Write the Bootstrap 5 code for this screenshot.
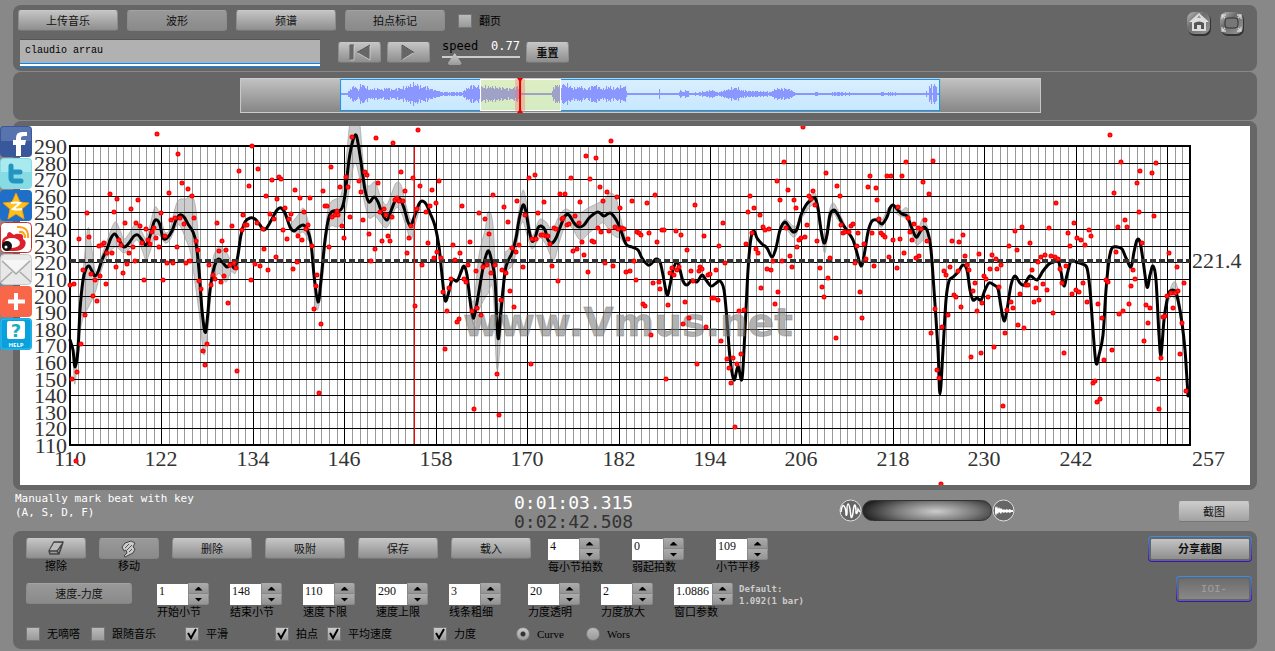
<!DOCTYPE html>
<html lang="zh-CN">
<head>
<meta charset="utf-8">
<meta name="viewport" content="width=device-width, initial-scale=1">
<title>Vmus.net</title>
<link rel="stylesheet" href="https://cdn.jsdelivr.net/npm/bootstrap@5.3.0/dist/css/bootstrap.min.css">
<style>
body{background:#888;color:#000;font:11px/14px "Liberation Sans","Noto Sans CJK SC",sans-serif;padding:5px 18px 0 13px}
.panel{background:#666;border-radius:8px;margin-bottom:1px}
.panel svg,.side svg{display:block}
.top{height:66px;padding:5px 12px 4px 5px}
.strip{padding:6px 0 7px}
.strip svg{width:64.4%;margin-left:18.25%}
.plot{padding:5px 7px}
.plot svg{width:100%;height:auto;background:#fff}
.key{height:21px;padding:0;border:1px solid #8c8c8c;border-top-color:#c8c8c8;border-bottom-color:#777;border-radius:3px;background:linear-gradient(#c4c4c4,#8e8e8e);font-size:11px;line-height:18px;color:#111;display:flex;align-items:center;justify-content:center;flex:none}
.key.dim{background:linear-gradient(#999,#8a8a8a);border-color:#a2a2a2 #8c8c8c #858585}
.key.lit{background:linear-gradient(#ccc,#a2a2a2)}
.w43{width:43px}.w60{width:60px}.w72{width:72px}.w80{width:80px}.w100{width:100px}.w106{width:106px}
.song{width:300px;height:28px;margin-left:2px;padding:0 5px 6px;border:0;border-top:1px solid #555;border-bottom:1px solid #08f;border-radius:0;background:#b1b1b1;box-shadow:inset 0 -2px #fff,inset 0 -3px #08f;font:10px/14px "Liberation Mono",monospace;color:#000}
.mono{font-family:"DejaVu Sans Mono",monospace}
.speed{width:78px;font-size:12px;line-height:14px;margin:0 6px 0 12px}
.slide{appearance:none;display:block;width:100%;height:12px;margin:0;background:linear-gradient(#ccc,#ccc) 0 3px/100% 2px no-repeat}
.slide::-webkit-slider-thumb{appearance:none;width:14px;height:12px;background:linear-gradient(#ccc,#999);clip-path:polygon(50% 0,100% 85%,90% 100%,10% 100%,0 85%)}
.tick{appearance:none;width:14px;height:14px;margin:0;flex:none;background:linear-gradient(#bbb,#999);border:1px solid #777}
.tick:checked{background:url("data:image/svg+xml,%3Csvg xmlns='http://www.w3.org/2000/svg' viewBox='0 0 12 12'%3E%3Cpath d='M2 5l3 5 5-9' fill='none' stroke='%23000' stroke-width='2'/%3E%3C/svg%3E"),linear-gradient(#ccc,#999)}
.tick[type=radio]{border-radius:50%}
.tick[type=radio]:checked{background:radial-gradient(circle,#333 2px,transparent 3px),linear-gradient(#ccc,#999)}
.opt{display:flex;align-items:center;gap:7px;flex:none}
.opt span{white-space:nowrap}
.o65{width:65px}.o94{width:94px}.o90{width:90px}.o52{width:52px}.o106{width:106px}.o83{width:83px}.o70{width:70px}
.latin{font-family:"Liberation Serif",serif}
.between{height:40px;display:grid;grid-template-columns:501px 1fr 176px 241px;align-items:start}
.note{color:#fff;font-size:11px;line-height:14px;padding:1px 0 0 2px}
.clock{font-size:18px;line-height:19px;padding-top:2px;color:#fff}
.clock .total{color:#333}
.tone{appearance:none;width:130px;height:21px;margin:0;border-radius:11px;background:radial-gradient(ellipse 58% 95% at 57% 55%,#ccc,#777 55%,#222);border:1px solid #333}
.tone::-webkit-slider-thumb{appearance:none;width:1px;height:1px}
.dial{margin-left:-1px;padding-top:8px}
.controls{height:118px;padding:5px 5px 0 13px}
.tools{gap:13px;height:47px;padding-top:2px}
.fields{gap:12px;height:42px}
.spin{width:61px;flex:none}
.spin.wide{width:71px}
.spin label{display:block;white-space:nowrap;line-height:14px}
.num{display:flex;height:22px}
.num input{width:31px;height:21px;margin-top:1px;padding:0 2px 6px;border:0;border-radius:0;font:12px/14px "Liberation Serif",serif;color:#111;background:#fff}
.last .num input{width:38px}
.num div{width:21px;background:#888;border-radius:0 3px 3px 0;overflow:hidden}
.num button{display:block;width:21px;height:11px;padding:0;border:1px solid #888;border-top-color:#aaa;background:linear-gradient(#aaa,#949494)}
.num button::before{content:"";display:block;margin:auto;width:8px;height:4px;background:#000;clip-path:polygon(50% 0,100% 100%,0 100%)}
.num button+button::before{clip-path:polygon(0 0,100% 0,50% 100%)}
.tool{text-align:center;flex:none}
.ring{padding:1px;border-radius:4px;background:linear-gradient(#3c8fe8,#3a10c8);width:104px;height:26px}
.ring .key{width:100%;height:24px;font-weight:700;border:2px solid #666}
.ring.small-ring{width:76px}
.ring .key:disabled{background:linear-gradient(#6d6d6d,#888);color:#a0a0a0;font-weight:400;font-family:"Liberation Mono",monospace}
.default{font-size:9px;line-height:12px;font-weight:700;color:#ccc;margin-left:4px;white-space:nowrap}
.side{position:absolute;left:0;top:126px;width:32px}
</style>
</head>
<body>
<header class="panel top d-flex justify-content-between">
  <div>
    <div class="d-flex align-items-center" style="gap:9px">
      <button class="key w100">上传音乐</button><button class="key dim w100">波形</button><button class="key w100">频谱</button><button class="key dim w100">拍点标记</button>
      <label class="opt ms-1"><input class="tick" type="checkbox"><span>翻页</span></label>
    </div>
    <div class="d-flex pt-2">
      <input class="song" type="text" value="claudio arrau" aria-label="曲名">
      <div class="d-flex" style="padding:3px 0 0 18px;gap:6px">
        <button class="key w43" aria-label="后退"><svg width="22" height="17" viewBox="0 0 22 17"><path d="M1 1h4v15H1zM21 1v15L8 8.500z" fill="#666" stroke="#ddd" stroke-width=".7"/><path d="M1 16V1h4M21 1L8 8.500" fill="none" stroke="#444"/></svg></button>
        <button class="key w43" aria-label="播放"><svg width="15" height="17" viewBox="0 0 15 17"><path d="M1 1v15l12-7.500z" fill="#666" stroke="#ddd" stroke-width=".7"/><path d="M1 16V1l12 7.500" fill="none" stroke="#444"/></svg></button>
      </div>
      <div class="speed mono"><label for="speed" class="d-flex justify-content-between"><span>speed</span><span class="text-white">0.77</span></label><input class="slide" id="speed" type="range" min="0.65" max="2" step="0.01" value="0.77"></div>
      <div style="padding-top:3px"><button class="key w43 fw-bold">重置</button></div>
    </div>
  </div>
  <nav class="d-flex" style="gap:6px">
    <a href="#home" aria-label="主页"><svg width="27" height="27" viewBox="0 0 27 27"><defs><linearGradient id="glass" x2="1" y2="1"><stop stop-color="#bbb"/><stop offset=".4" stop-color="#6c6c6c"/><stop offset="1" stop-color="#999"/></linearGradient></defs><rect x="3" y="3" width="23" height="23" rx="7" fill="#333"/><rect x="2" y="2" width="23" height="22" rx="7" fill="url(#glass)"/><path d="M14 3L4 12h3v9h14v-9h3z" fill="#ddd"/><path d="M9 13q5-3 10 0v6h-3v-4h-4v4H9z" fill="#555"/><path d="M14 5l-2 3h4z" fill="#999"/></svg></a>
    <a href="#full" aria-label="全屏"><svg width="27" height="27" viewBox="0 0 27 27"><rect x="3" y="3" width="23" height="23" rx="7" fill="#333"/><rect x="2" y="2" width="23" height="22" rx="7" fill="url(#glass)"/><rect x="7" y="8" width="13" height="10" rx="3" fill="#777" stroke="#333"/><path d="M4 9V5h4M4 5l3 3M23 9V5h-4M23 5l-3 3M4 17v4h4M4 21l3-3M23 17v4h-4M23 21l-3-3" fill="none" stroke="#d4d4d4" stroke-width="1.300"/></svg></a>
  </nav>
</header>

<section class="panel strip">
  <svg viewBox="240 78 801 35"><defs><linearGradient id="steel" x2="0" y2="1"><stop stop-color="#c2c2c2"/><stop offset="1" stop-color="#858585"/></linearGradient><linearGradient id="sky" x2="0" y2="1"><stop stop-color="#d9efff"/><stop offset="1" stop-color="#c6e8ff"/></linearGradient></defs>
    <rect x="240.500" y="78.500" width="800" height="34" fill="url(#steel)" stroke="#ccc"/>
    <rect x="340.500" y="79.500" width="599" height="31" fill="url(#sky)" stroke="#1296f5"/>
    <path id="wave" stroke="#8890ff"/>
    <rect x="480.500" y="79.500" width="80" height="31" fill="#e0ee96" fill-opacity=".58"/>
    <path id="waveSel" stroke="#9c9cc8"/>
    <rect x="480.500" y="79.500" width="80" height="31" fill="none" stroke="#fff"/>
    <rect x="515" y="79" width="10" height="33" fill="#f66" opacity=".35"/><path d="M520 78v34" stroke="#e00000" stroke-width="2"/><path d="M517 78h6l-2 3h-2zM517 113h6l-2-3h-2z" fill="#e00"/>
  </svg>
</section>

<main class="panel plot">
  <svg viewBox="20 126 1230 359" font-family="'Liberation Serif',serif" font-size="22">
    <path id="band" fill="#888" fill-opacity=".42" stroke="#888" stroke-opacity=".5"/>
    <path id="minor" stroke="#999" shape-rendering="crispEdges"/>
    <path id="major" stroke="#000" shape-rendering="crispEdges"/>
    <rect x="70" y="146" width="1120" height="299" fill="none" stroke="#000" stroke-width="2"/>
    <path id="curve" fill="none" stroke="#000" stroke-width="3" stroke-linejoin="round" stroke-linecap="round"/>
    <path d="M70 261H1190" stroke="#333" stroke-width="4" stroke-dasharray="6 3"/>
    <path d="M414.500 147V444" stroke="red" shape-rendering="crispEdges"/>
    <text x="463" y="336" font-family="'DejaVu Sans',sans-serif" font-weight="700" font-size="39" fill="#777" fill-opacity=".58" stroke="#777" stroke-opacity=".4">www.Vmus.net</text>
    <g id="labels" fill="#333"></g>
    <g id="beats" fill="#f99" stroke="red" stroke-width="2"></g>
  </svg>
</main>

<section class="between">
  <div class="note mono">Manually mark beat with key<br>(A, S, D, F)</div>
  <div class="clock mono"><div>0:01:03.315</div><div class="total">0:02:42.508</div></div>
  <div class="dial d-flex align-items-center" style="gap:0">
    <svg class="flex-shrink-0" width="23" height="23" viewBox="0 0 23 23"><circle cx="11.500" cy="11.500" r="10.500" fill="#666" stroke="#ddd"/><path d="M2 13q1-8 3-6t2 9q1 1 1-3 0-8 1-8t2 5l1 8q1 2 2-4 1-9 2-8t1 8q1 2 2-4l2 3" fill="none" stroke="#fff" stroke-width="1.500"/></svg>
    <input class="tone flex-shrink-0" type="range" aria-label="混音">
    <svg class="flex-shrink-0" width="23" height="23" viewBox="0 0 23 23"><circle cx="11.500" cy="11.500" r="10.500" fill="#666" stroke="#ddd"/><path d="M3 7l1 2 1-2 1 3 1-2 1 2 1-1 2 2 1-1 1 1 2-1 1 1 2-1 1 1h2v2h-2l-1 1-2-1-1 1-2-1-1 1-2-1-1 2-2-2-1 2-1-1-1 3-1-3z" fill="#fff"/></svg>
  </div>
  <div class="d-flex justify-content-end" style="padding:10px 7px 0 0"><button class="key lit w72">截图</button></div>
</section>

<section class="panel controls d-flex justify-content-between">
  <div>
    <div class="tools d-flex align-items-start">
      <div class="tool"><button class="key w60" aria-label="擦除"><svg width="18" height="17" viewBox="0 0 18 17"><path d="M7 2h9l-4 12H3l-1-3zM2 11h8l6-9M10 11l2 3" fill="#999" stroke="#444" stroke-width="1.500" stroke-linejoin="round"/><path d="M7 3h8l-5 7H3z" fill="#bbb"/></svg></button>擦除</div>
      <div class="tool"><button class="key dim w60" aria-label="移动"><svg width="18" height="18" viewBox="0 0 18 18"><path d="M2 7l3-4 6-2 4 2-2 4 2 2-2 4-4 2-4 2-1-1 3-3-1-3-2 1-1-2z" fill="#ccc" stroke="#444"/><path d="M5 8l4-4M7 10l5-5M9 12l3-3" fill="none" stroke="#555"/></svg></button>移动</div>
      <button class="key w80">删除</button><button class="key w80">吸附</button><button class="key w80">保存</button><button class="key w80">载入</button>
      <div class="spin wide ms-1"><div class="num"><input id="n1" value="4"><div><button aria-label="增"></button><button aria-label="减"></button></div></div><label for="n1">每小节拍数</label></div>
      <div class="spin wide"><div class="num"><input id="n2" value="0"><div><button aria-label="增"></button><button aria-label="减"></button></div></div><label for="n2">弱起拍数</label></div>
      <div class="spin wide"><div class="num"><input id="n3" value="109"><div><button aria-label="增"></button><button aria-label="减"></button></div></div><label for="n3">小节平移</label></div>
    </div>
    <div class="fields d-flex align-items-start">
      <button class="key dim w106" style="margin-right:13px">速度-力度</button>
      <div class="spin"><div class="num"><input id="m1" value="1"><div><button aria-label="增"></button><button aria-label="减"></button></div></div><label for="m1">开始小节</label></div>
      <div class="spin"><div class="num"><input id="m2" value="148"><div><button aria-label="增"></button><button aria-label="减"></button></div></div><label for="m2">结束小节</label></div>
      <div class="spin"><div class="num"><input id="m3" value="110"><div><button aria-label="增"></button><button aria-label="减"></button></div></div><label for="m3">速度下限</label></div>
      <div class="spin"><div class="num"><input id="m4" value="290"><div><button aria-label="增"></button><button aria-label="减"></button></div></div><label for="m4">速度上限</label></div>
      <div class="spin"><div class="num"><input id="m5" value="3"><div><button aria-label="增"></button><button aria-label="减"></button></div></div><label for="m5">线条粗细</label></div>
      <div class="spin" style="margin-left:6px"><div class="num"><input id="m6" value="20"><div><button aria-label="增"></button><button aria-label="减"></button></div></div><label for="m6">力度透明</label></div>
      <div class="spin"><div class="num"><input id="m7" value="2"><div><button aria-label="增"></button><button aria-label="减"></button></div></div><label for="m7">力度放大</label></div>
      <div class="d-flex"><div class="spin last"><div class="num"><input id="m8" value="1.0886"><div><button aria-label="增"></button><button aria-label="减"></button></div></div><label for="m8">窗口参数</label></div><div class="default mono">Default:<br>1.092(1 bar)</div></div>
    </div>
    <div class="d-flex" style="padding-top:2px">
      <label class="opt o65"><input class="tick" type="checkbox"><span>无嘀嗒</span></label>
      <label class="opt o94"><input class="tick" type="checkbox"><span>跟随音乐</span></label>
      <label class="opt o90"><input class="tick" type="checkbox" checked><span>平滑</span></label>
      <label class="opt o52"><input class="tick" type="checkbox" checked><span>拍点</span></label>
      <label class="opt o106"><input class="tick" type="checkbox" checked><span>平均速度</span></label>
      <label class="opt o83"><input class="tick" type="checkbox" checked><span>力度</span></label>
      <label class="opt o70"><input class="tick" type="radio" name="mode" checked><span class="latin">Curve</span></label>
      <label class="opt"><input class="tick" type="radio" name="mode"><span class="latin">Wors</span></label>
    </div>
  </div>
  <div class="d-flex flex-column align-items-end" style="gap:14px">
    <div class="ring"><button class="key">分享截图</button></div>
    <div class="ring small-ring"><button class="key" disabled>IOI-</button></div>
  </div>
</section>

<nav class="side">
  <a href="#facebook" aria-label="Facebook"><svg width="32" height="32" viewBox="0 0 32 32"><rect y="0" width="32" height="31" rx="4" fill="#39589c"/><path d="M1 4q0-3 3-3h24q3 0 3 3v11H1z" fill="#5873ad"/><path d="M16 30V19h-3v-5h3v-2q0-6 6-6h5v4h-3q-3 0-3 2v2h5l-1 5h-4v11z" fill="#fff"/></svg></a>
  <a href="#twitter" aria-label="Twitter"><svg width="32" height="32" viewBox="0 0 32 32"><rect width="32" height="31" rx="4" fill="#86dbe4"/><path d="M1 4q0-3 3-3h24q3 0 3 3v10H1z" fill="#a8eaee"/><path d="M11 8v12q0 3 4 3h6M11 14h9" fill="none" stroke="#2494c2" stroke-width="5" stroke-linecap="round"/></svg></a>
  <a href="#qzone" aria-label="QZone"><svg width="32" height="32" viewBox="0 0 32 32"><rect width="32" height="31" rx="4" fill="#1f6fc9"/><path d="M16 3l4 9 9 1-7 6 2 10-8-5-8 5 2-10-7-6 9-1z" fill="#ffc21c" stroke="#ee9b10"/><path d="M11 13q5-1 9 0l-7 6q5 1 9 0" fill="none" stroke="#fff" stroke-width="2"/></svg></a>
  <a href="#weibo" aria-label="Weibo"><svg width="32" height="32" viewBox="0 0 32 32"><rect x=".5" y=".5" width="31" height="30" rx="4" fill="#fff" stroke="#c5302b"/><path d="M2 20q0-4 5-6 0-4 3-4l4 3q2-2 6-1 4 0 3 5 4 2 2 7-2 5-11 5H5Q1 25 2 20z" fill="#dc1f2a"/><ellipse cx="12" cy="21" rx="8" ry="5" fill="#fff"/><circle cx="7" cy="24" r="5" fill="#111"/><circle cx="6" cy="25" r="1.500" fill="#fff"/><path d="M19 10q6-1 6 6M17 5q12-1 11 11" fill="none" stroke="#ffa31a" stroke-width="2"/></svg></a>
  <a href="#mail" aria-label="Mail"><svg width="32" height="32" viewBox="0 0 32 32"><rect x=".5" y=".5" width="31" height="30" rx="4" fill="#e8e8e8" stroke="#ccc"/><path d="M1 28l11-10M31 28L20 18M2 7l14 13L30 7" fill="none" stroke="#aaa" stroke-width="1.500"/><path d="M3 6l13 12L29 6" fill="#f6f6f6"/></svg></a>
  <a href="#share" aria-label="Share"><svg width="32" height="32" viewBox="0 0 32 32"><rect width="32" height="31" rx="4" fill="#f8674a"/><path d="M16 7v17M8 15.500h17" stroke="#fff" stroke-width="4"/></svg></a>
  <a href="#help" aria-label="Help"><svg width="32" height="32" viewBox="0 0 32 32"><rect width="32" height="32" rx="4" fill="#0aa0dc"/><rect x="1" y="1" width="30" height="30" rx="3" fill="none" stroke="#37bdf0"/><rect x="7" y="3" width="18" height="18" rx="2" fill="#fff"/><text x="16" y="19" text-anchor="middle" font-family="DejaVu Sans" font-weight="700" font-size="18" fill="#19aebb">?</text><text x="16" y="29" text-anchor="middle" font-family="Open Sans" font-weight="700" font-size="6" fill="#fff">HELP</text></svg></a>
</nav>

<script src="https://cdn.jsdelivr.net/npm/bootstrap@5.3.0/dist/js/bootstrap.bundle.min.js"></script>
<script>
const el = id => document.getElementById(id);
const parse = s => s.trim().split(/\s+/).map(p => p.split(',').map(Number));
const X = bar => Math.round(70 + (bar - 110) * 1120 / 147);
const Y = bpm => Math.round(445 - (bpm - 110) * 299 / 180);

// Grid and axis labels
let minor = '', major = '', text = '';
for (let b = 111; b < 257; b++) {
  const seg = `M${X(b)}.5 146V445`;
  if ((b - 110) % 12) minor += seg; else major += seg;
}
for (let b = 110; b <= 242; b += 12) text += `<text x="${X(b)}" y="466" text-anchor="middle">${b}</text>`;
for (let v = 110; v <= 290; v += 10) {
  major += `M70 ${Y(v)}.5H1190`;
  text += `<text x="67" y="${Y(v) + 8}" text-anchor="end">${v}</text>`;
}
text += '<text x="1192" y="466">257</text><text x="1192" y="268">221.4</text>';
el('minor').setAttribute('d', minor);
el('major').setAttribute('d', major);
el('labels').innerHTML = text;

// Smoothed tempo curve
const curve = parse(`70,340 73,350 75,367 78,350 80,310 83,280 86,269 89,266 92,271 95,276 98,272 102,260 107,249 111,238 115,234 119,240 124,247 129,243 134,236 138,235 142,240 146,245 150,236 154,222 157,220 160,225 163,238 167,238 172,231 176,220 180,215 184,217 188,224 193,232 196,243 199,270 202,310 205,332 207,322 210,290 213,272 216,262 219,259 223,263 227,267 231,265 235,268 238,255 241,235 245,222 250,218 255,219 260,225 264,230 268,226 273,217 277,210 281,208 285,213 290,227 294,231 299,227 303,225 307,229 311,243 314,275 318,302 321,280 325,240 329,217 333,211 338,211 342,208 345,195 349,160 353,140 356,135 358,143 361,162 365,190 369,202 374,197 378,202 382,213 387,220 391,211 396,199 400,199 404,208 408,222 411,225 415,215 419,204 422,201 426,204 430,213 435,226 439,247 442,275 445,300 448,295 452,280 457,281 461,272 464,266 467,275 470,300 473,318 476,308 480,285 484,263 488,251 491,258 495,280 498,338 501,310 505,272 508,261 512,253 516,238 519,220 523,205 526,212 529,230 532,241 535,238 538,228 541,226 545,230 548,240 552,243 556,238 561,225 565,216 569,215 574,223 579,227 584,225 590,217 598,212 604,216 610,213 615,218 620,228 626,244 632,247 638,250 642,258 648,265 652,263 656,259 660,262 663,275 667,295 670,285 673,270 677,262 680,270 683,281 687,285 692,280 697,282 702,275 706,280 711,286 715,284 720,281 724,290 727,320 730,358 734,380 738,366 742,379 745,330 748,270 751,238 754,231 757,238 762,244 767,248 772,257 776,248 780,230 785,222 789,227 793,232 797,229 801,215 806,205 811,200 815,198 818,208 821,230 824,243 827,235 830,215 834,210 838,215 842,223 848,232 853,240 857,253 861,266 864,256 868,232 872,221 877,220 882,224 887,217 890,208 893,205 897,209 902,214 907,216 911,226 916,237 920,232 924,227 928,233 931,250 934,290 938,350 940,394 943,350 946,300 949,281 953,277 958,272 963,265 967,270 970,290 973,300 977,298 981,300 985,290 989,283 994,285 998,289 1001,307 1004,321 1007,310 1011,285 1015,276 1020,283 1024,285 1030,276 1037,280 1043,271 1049,264 1054,262 1058,260 1061,272 1064,286 1067,275 1071,261 1076,262 1082,264 1087,268 1090,290 1093,330 1096,363 1099,355 1103,335 1106,290 1109,260 1112,248 1117,247 1122,249 1126,258 1131,267 1134,252 1137,240 1140,242 1143,260 1147,287 1150,275 1153,266 1156,280 1159,335 1161,355 1164,320 1167,300 1170,291 1175,291 1178,300 1182,323 1185,350 1187,380 1188,396`);
const spline = p => p.slice(1).reduce((d, q, i) => {
  const a = p[i - 1] || p[i], b = p[i], e = p[i + 2] || q;
  return d + `C${b[0] + (q[0] - a[0]) / 6} ${b[1] + (q[1] - a[1]) / 6} ${q[0] - (e[0] - b[0]) / 6} ${q[1] - (e[1] - b[1]) / 6} ${q[0]} ${q[1]}`;
}, `M${p[0]}`);
el('curve').setAttribute('d', spline(curve));

// Intensity band: x, upper edge, lower edge
const bands = [
  '73,350,355 75,360,384 79,320,340 83,272,318 88,228,308 92,250,300 96,272,290 102,255,268 108,238,255 115,222,247 120,230,250 124,239,253 130,232,248 137,222,240 142,232,250 146,238,260 150,225,252 155,207,236 160,215,236 165,232,243 170,228,240 176,205,227 180,199,226 186,199,240 191,195,255 196,210,290 200,265,320 204,325,355 208,310,330 212,265,285 216,250,276 220,247,274 226,252,282 231,260,272 236,262,272 240,236,245',
  '290,225,230 298,215,234 303,208,232 307,217,238 311,237,250 315,280,300 318,300,309 322,272,285 327,215,235 331,202,226 336,199,227 341,195,225 345,170,215 350,120,185 355,80,163 360,125,180 365,180,205 369,186,218 375,182,216 380,195,222 386,205,228 391,195,220 396,183,208 401,185,212 406,205,226 411,220,240 415,210,225 420,203,208',
  '470,295,305 474,300,325 479,255,310 485,230,298 488,212,294 493,225,290 497,300,370 502,290,320 505,255,275 508,250,270 514,240,262 519,210,232 523,190,222 527,205,235 532,235,249 538,222,240 541,219,238 546,222,245 552,230,259 555,225,258 560,214,240 566,209,225 572,212,228 578,213,238 582,212,240 588,208,234 598,203,226 604,200,223 610,193,232 616,198,237 620,215,238 626,240,246',
  '780,228,233 785,219,228 793,226,237 797,225,233 801,213,220 811,196,206 816,195,206 821,225,235 825,236,253 829,212,225 833,203,214 838,210,220 845,225,230',
  '877,217,222 882,220,227 890,206,212 900,211,216 907,208,220 912,225,235 917,232,245 923,218,240 928,228,236',
  '1165,310,315 1170,290,298 1174,282,298 1178,290,305 1184,338,345'
].map(parse);
el('band').setAttribute('d', bands.map(b => spline(b.map(q => [q[0], q[1]])) + spline(b.map(q => [q[0], q[2]]).reverse()).replace('M', 'L') + 'Z').join(''));

// Individual beats
const beats = parse(`157,134 178,154 252,146 239,171 249,186 258,169 266,196 272,180 279,177 281,179 277,199 182,183 188,189 192,196 169,193 110,194 117,199 114,212 87,213 79,239 89,237 83,270 91,274 95,280 70,285 74,284 100,276 106,284 93,296 97,301 85,315 81,344 99,246 102,245 104,243 107,253 112,253 116,267 119,240 121,245 123,273 125,223 127,264 129,253 131,209 133,247 135,261 136,223 138,200 140,226 142,243 144,280 146,229 148,240 150,244 152,232 154,228 156,238 159,247 161,213 163,280 165,236 167,263 173,263 171,220 175,218 177,247 180,218 184,224 186,263 190,261 194,218 196,241 198,250 199,281 201,289 203,351 205,365 207,344 209,265 211,285 213,275 215,279 219,251 217,223 221,282 222,241 224,276 226,250 228,303 230,265 232,226 234,263 236,268 237,371 242,230 243,215 245,225 247,225 251,280 255,264 257,223 260,266 263,229 264,249 268,270 270,214 274,219 276,257 283,230 285,208 287,239 289,219 291,214 293,269 295,190 297,262 298,236 300,198 302,240 304,212 306,229 308,225 310,198 312,246 314,309 316,286 317,275 319,393 321,324 323,191 325,206 327,206 329,247 72,379 77,372 76,461
331,167 332,217 335,215 337,211 338,215 340,187 342,226 344,238 346,177 348,187 350,217 352,137 359,181 361,192 363,220 365,172 367,175 369,234 371,261 375,249 376,138 378,183 380,212 382,241 384,209 386,215 388,236 390,241 392,217 393,143 395,200 397,198 399,201 401,172 403,201 405,191 407,253 409,238 411,226 413,178 415,306 417,209 418,130 420,186 422,265 426,212 428,243 430,206 432,190 434,258 436,203 437,252 439,181 441,258 443,292 445,349 447,311 449,288 451,279 453,245 455,260 457,322 459,319 460,253 462,206 464,279 466,282 468,265 470,242 472,311 474,409 476,271 477,308 479,213 481,315 483,267 485,219 487,265 489,234 491,273 493,195 495,265 497,374 499,415 501,300 502,270 504,207 506,273 508,222 510,291 512,248 514,307 516,252 517,201 519,245 523,267 525,215 529,178 531,364 532,239 535,175 536,239 538,213 541,235 543,235 544,202 546,236 548,236 550,244 552,266 554,228 556,229 558,281 560,194 562,219 563,218 565,194 567,225 569,224 571,178 573,251 575,216 577,249 579,223 580,202 582,242 584,255 586,156 588,272 590,179 592,241 594,242 596,158 598,228 600,187 601,232 603,201 605,263 607,192 609,231 611,141 613,266 615,227 617,197 618,229 620,208 622,228 624,229 626,272 628,239 630,271 632,201 634,261 636,280 637,232
639,233 641,235 643,304 645,306 647,203 649,233 651,335 653,283 655,195 657,242 659,282 660,289 662,230 664,230 666,379 668,305 670,273 672,268 674,275 676,231 677,270 679,267 681,235 683,324 685,302 687,250 689,318 691,271 693,281 695,205 697,364 699,271 700,267 702,269 704,236 706,327 708,275 710,274 712,298 714,298 716,270 718,300 719,246 721,341 723,223 725,263 727,359 729,368 731,383 733,358 735,427 737,364 739,311 741,354 744,310 746,244 748,212 750,196 752,233 754,208 756,249 758,253 760,215 761,288 763,227 765,230 767,269 769,229 771,270 773,261 775,304 777,181 778,292 780,200 782,261 784,162 786,228 788,190 790,256 792,267 794,200 796,208 797,247 799,240 801,238 803,127 805,237 807,225 809,196 811,199 813,191 815,205 817,241 820,268 822,287 824,297 826,173 828,278 830,258 836,338 837,186 840,196 841,225 843,233 845,232 849,232 851,226 853,224 855,263 857,246 858,233 860,292 862,318 864,244 866,259 868,187 870,176 872,233 874,266 876,188 877,200 879,219 881,233 883,235 885,237 887,176 889,257 891,176 893,240 897,268 898,207 900,239 902,176 904,253 906,162 908,218 910,232 912,240 914,224 916,258 918,228 919,256 921,229 923,182 925,220 927,241 929,194 931,333 933,161 935,309 937,370 939,378 941,484 942,327 944,271 946,275 948,315 950,267
952,241 954,295 956,297 958,271 959,242 961,307 963,235 965,256 967,265 969,270 971,357 973,291 975,283 977,311 979,254 981,353 982,303 984,276 986,279 988,297 990,269 992,255 994,347 996,259 997,269 999,287 1001,265 1003,406 1005,333 1007,310 1009,246 1011,302 1013,308 1015,231 1017,250 1018,325 1020,294 1022,227 1024,328 1026,285 1028,285 1030,243 1032,270 1034,302 1036,288 1038,262 1039,300 1041,257 1043,284 1045,255 1047,290 1049,228 1051,256 1053,313 1055,257 1056,203 1058,259 1060,269 1062,283 1064,353 1066,266 1068,233 1070,246 1072,294 1074,223 1076,290 1077,238 1079,292 1081,240 1083,283 1085,245 1087,302 1089,230 1091,236 1093,383 1095,381 1097,402 1098,304 1100,399 1102,318 1104,360 1106,280 1108,282 1110,135 1112,350 1114,193 1116,252 1118,227 1119,314 1121,162 1123,311 1125,220 1127,227 1129,304 1131,286 1133,270 1135,279 1137,183 1139,212 1140,171 1142,243 1144,341 1146,305 1148,323 1150,308 1152,173 1154,216 1156,163 1158,379 1159,409 1161,358 1163,317 1165,316 1167,296 1169,253 1171,293 1173,308 1175,293 1177,267 1178,291 1180,354 1182,323 1184,283 1186,391`);
el('beats').innerHTML = beats.map(([x, y]) => `<circle cx="${x}" cy="${y}" r="1.5"/>`).join('');

// Audio envelope: x, amplitude
const env = parse(`341,1 346,1 350,5 354,9 358,4 361,11 365,8 370,5 376,6 382,5 387,7 392,5 398,6 404,7 408,9 415,11 420,8 425,8 430,6 436,4 442,2 462,2 466,6 472,9 480,8 490,8 500,7 510,6 519,8 521,1 551,1 554,9 560,11 568,9 574,6 580,8 586,5 594,10 602,5 608,8 614,6 620,8 625,8 627,1 658,1 659,5 660,1 678,1 680,5 682,2 686,4 690,1 700,2 712,4 718,2 728,5 736,7 742,4 750,3 760,3 770,2 776,6 784,6 790,5 795,1 813,1 815,3 818,1 840,2 855,1 880,1 882,3 884,1 890,2 900,1 925,1 926,3 927,1 928,1 929,10 931,9 932,2 933,11 936,8 937,1 940,1`);
const wave = (from, to) => {
  let d = '';
  for (let x = from; x < to; x++) {
    const i = env.findIndex(e => e[0] > x), a = env[i - 1], b = env[i];
    const amp = a[1] + (b[1] - a[1]) * (x - a[0]) / (b[0] - a[0]);
    const h = Math.max(1, Math.round(amp * (0.85 + 0.3 * Math.sin(x * 12.9898) * Math.cos(x * 4.1))));
    d += `M${x}.5 ${94 - h}V${94 + h}`;
  }
  return d;
};
el('wave').setAttribute('d', wave(341, 480) + wave(561, 939));
el('waveSel').setAttribute('d', wave(481, 560));
</script>
</body>
</html>
